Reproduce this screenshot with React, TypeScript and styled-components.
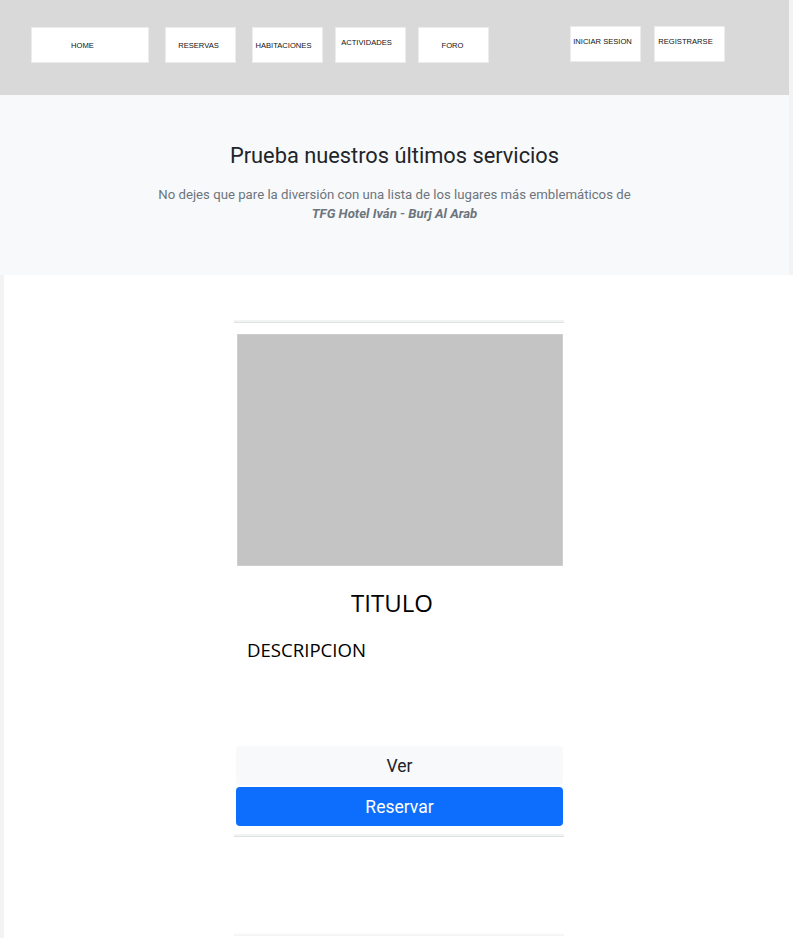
import React from "react";
import styled, { createGlobalStyle } from "styled-components";

const GlobalStyle = createGlobalStyle`
  html, body { margin: 0; padding: 0; }
  body {
    background: #f3f3f3;
    font-family: Roboto, "Liberation Sans", sans-serif;
    width: 793px;
    overflow: hidden;
  }
  * { box-sizing: border-box; }
`;

const Page = styled.div`
  width: 793px;
  min-height: 938px;
  display: flex;
  flex-direction: column;
`;

const Header = styled.header`
  width: 789px;
  height: 95px;
  background: #d9d9d9;
  display: flex;
  align-items: flex-start;
  padding: 27px 0 0 31px;
`;

const NavButton = styled.div<{ $w: number; $ml: number; $dx: number; $top?: boolean; $up?: boolean }>`
  width: ${(p) => p.$w}px;
  height: 36px;
  margin-left: ${(p) => p.$ml}px;
  margin-top: ${(p) => (p.$up ? -1 : 0)}px;
  background: #ffffff;
  border: 1px solid #ececec;
  display: flex;
  justify-content: center;
  align-items: ${(p) => (p.$top ? "flex-start" : "center")};
  padding-top: ${(p) => (p.$top ? 10 : 0)}px;
  padding-right: ${(p) => p.$dx}px;
  font-family: "Liberation Sans", Arial, sans-serif;
  font-size: 7.6px;
  color: #111;
  white-space: nowrap;
`;

const Hero = styled.section`
  width: 789px;
  height: 180px;
  background: #f8f9fa;
  display: flex;
  flex-direction: column;
  align-items: center;
  padding-top: 48px;
`;

const HeroTitle = styled.h2`
  margin: 0;
  font-family: Roboto, sans-serif;
  font-weight: 400;
  font-size: 21.8px;
  color: #212529;
  line-height: 1.2;
`;

const HeroText = styled.p`
  margin: 16px 0 0;
  font-family: Roboto, sans-serif;
  font-size: 13.2px;
  color: #6c757d;
  text-align: center;
  line-height: 19px;
`;

const Strong = styled.strong`
  font-style: italic;
  font-weight: 700;
  color: #6c757d;
`;

const Main = styled.main`
  flex: 1;
  margin-left: 4px;
  background: #ffffff;
  display: flex;
  flex-direction: column;
  align-items: flex-start;
  padding: 45px 0 0 230px;
  min-height: 663px;
`;

const Card = styled.article`
  width: 330px;
  display: flex;
  flex-direction: column;
`;

const Rule = styled.div<{ $faint?: boolean }>`
  width: 330px;
  height: 3px;
  background: ${(p) => (p.$faint ? "#fafafa" : "#f2f4f4")};
  border-bottom: 1px solid ${(p) => (p.$faint ? "#f3f3f3" : "#dfe2e3")};
`;

const ImageBox = styled.div`
  margin: 11px 0 0 3px;
  width: 326px;
  height: 232px;
  background: #c4c4c4;
  border: 1px solid #cfcfcf;
`;

const Title = styled.h3`
  margin: 20px 0 0;
  padding-right: 14px;
  text-align: center;
  font-family: "Open Sans", sans-serif;
  font-weight: 400;
  font-size: 24px;
  line-height: 34px;
  color: #000;
`;

const Desc = styled.p`
  margin: 17px 0 0 13px;
  font-family: "Open Sans", sans-serif;
  font-size: 18.6px;
  line-height: 26px;
  color: #000;
  height: 109px;
`;

const Btn = styled.button<{ $primary?: boolean }>`
  margin: ${(p) => (p.$primary ? "2px" : "0")} 0 0 2px;
  width: 327px;
  height: 39px;
  border: none;
  border-radius: 4px;
  background: ${(p) => (p.$primary ? "#0d6efd" : "#f8f9fa")};
  color: ${(p) => (p.$primary ? "#ffffff" : "#212529")};
  font-family: Roboto, sans-serif;
  font-size: 17.5px;
  display: flex;
  align-items: center;
  justify-content: center;
  padding: 0;
`;

const Spacer = styled.div<{ $h: number }>`
  height: ${(p) => p.$h}px;
`;

export default function App() {
  return (
    <>
      <GlobalStyle />
      <Page>
        <Header>
          <NavButton $w={118} $ml={0} $dx={15}>HOME</NavButton>
          <NavButton $w={71} $ml={16} $dx={4}>RESERVAS</NavButton>
          <NavButton $w={71} $ml={16} $dx={8}>HABITACIONES</NavButton>
          <NavButton $w={71} $ml={12} $dx={8} $top>ACTIVIDADES</NavButton>
          <NavButton $w={71} $ml={12} $dx={2}>FORO</NavButton>
          <NavButton $w={71} $ml={81} $dx={6} $top $up>INICIAR SESION</NavButton>
          <NavButton $w={71} $ml={13} $dx={8} $top $up>REGISTRARSE</NavButton>
        </Header>
        <Hero>
          <HeroTitle>Prueba nuestros últimos servicios</HeroTitle>
          <HeroText>
            No dejes que pare la diversión con una lista de los lugares más emblemáticos de
            <br />
            <Strong>TFG Hotel Iván - Burj Al Arab</Strong>
          </HeroText>
        </Hero>
        <Main>
          <Card>
            <Rule />
            <ImageBox />
            <Title>TITULO</Title>
            <Desc>DESCRIPCION</Desc>
            <Btn>Ver</Btn>
            <Btn $primary>Reservar</Btn>
            <Spacer $h={8} />
            <Rule />
            <Spacer $h={96} />
            <Rule $faint />
          </Card>
        </Main>
      </Page>
    </>
  );
}
